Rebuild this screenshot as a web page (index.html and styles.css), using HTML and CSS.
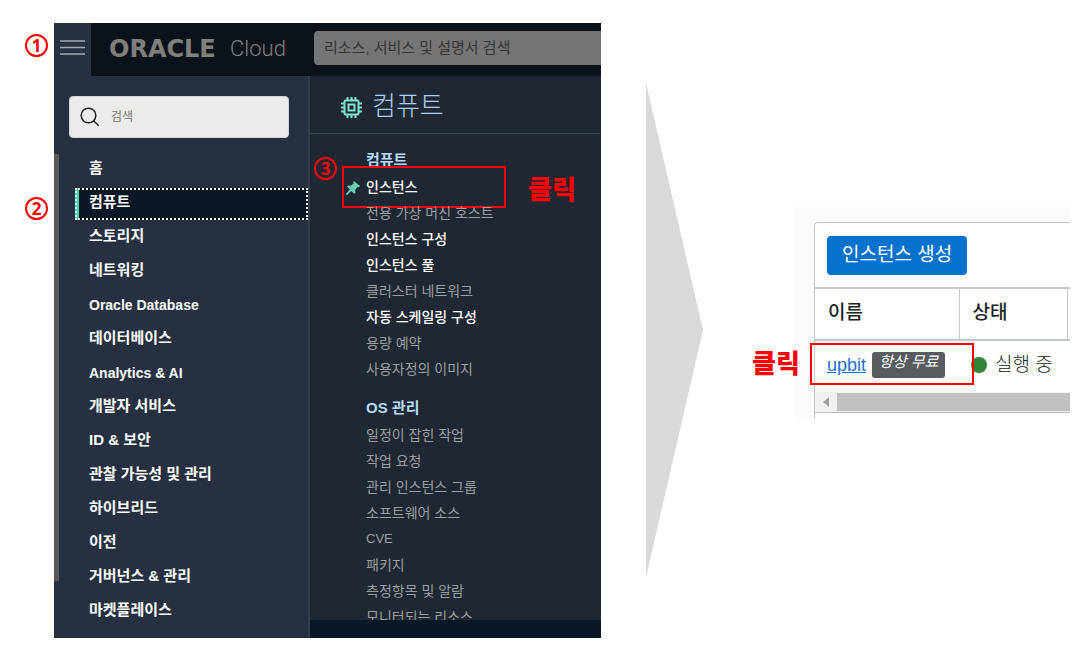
FILE: index.html
```html
<!DOCTYPE html>
<html lang="ko">
<head>
<meta charset="utf-8">
<meta name="viewport" content="width=device-width, initial-scale=1">
<title>Oracle Cloud 인스턴스</title>
<link rel="stylesheet" href="styles.css">
</head>
<body>
<main class="page">
  <section class="console">
    <header class="topbar">
      <button class="menu-button" type="button" aria-label="메뉴">
        <svg width="26" height="18" viewBox="0 0 26 18" fill="none" stroke="#a3a8ae" stroke-width="1.500"><path d="M0 2h25M0 8.500h25M0 15h25"/></svg>
      </button>
      <span class="step step-menu">1</span>
      <div class="brand"><span class="brand-name">ORACLE</span><span class="brand-cloud">Cloud</span></div>
      <input class="top-search" type="text" aria-label="리소스 검색" placeholder="리소스, 서비스 및 설명서 검색">
    </header>
    <div class="console-body">
      <nav class="sidebar" aria-label="서비스">
        <label class="side-search">
          <svg width="20" height="20" viewBox="0 0 20 20" fill="none" stroke="#222" stroke-width="1.500"><circle cx="8.500" cy="8.500" r="7.300"/><path d="M13.700 13.700l5 5"/></svg>
          <input type="text" aria-label="검색" placeholder="검색">
        </label>
        <ul class="services">
          <li><a href="#">홈</a></li>
          <li class="selected"><span class="step step-service">2</span><a href="#">컴퓨트</a></li>
          <li><a href="#">스토리지</a></li>
          <li><a href="#">네트워킹</a></li>
          <li class="latin"><a href="#">Oracle Database</a></li>
          <li><a href="#">데이터베이스</a></li>
          <li class="latin"><a href="#">Analytics &amp; AI</a></li>
          <li><a href="#">개발자 서비스</a></li>
          <li><a href="#">ID &amp; 보안</a></li>
          <li><a href="#">관찰 가능성 및 관리</a></li>
          <li><a href="#">하이브리드</a></li>
          <li><a href="#">이전</a></li>
          <li><a href="#">거버넌스 &amp; 관리</a></li>
          <li><a href="#">마켓플레이스</a></li>
        </ul>
        <div class="side-scroll"></div>
      </nav>
      <div class="detail">
        <div class="detail-head">
          <svg width="21" height="21" viewBox="0 0 21 21" fill="none" stroke="#7fe3cd" stroke-width="2"><rect x="3.500" y="3.500" width="14" height="14" rx="1"/><rect x="7.500" y="7.500" width="6" height="6"/><path d="M6.500 0v3M10.500 0v3M14.500 0v3M6.500 18v3M10.500 18v3M14.500 18v3M0 6.500h3M0 10.500h3M0 14.500h3M18 6.500h3M18 10.500h3M18 14.500h3"/></svg>
          <h1>컴퓨트</h1>
        </div>
        <div class="groups">
          <section class="group">
            <h2>컴퓨트</h2>
            <ul>
              <li class="pinned strong">
                <svg class="pin" width="14" height="14" viewBox="0 0 14 14" fill="#69cdb0"><path d="M8 0l6 5-1 1.300-1.400-.200-2.400 2.600.200 3-1.200 1L5.300 9.900 1 14l-1-.300.200-1.200L3.800 8.500 1 5.600 2 4.500l3.200.100 2.500-2.300L7.200.900z"/></svg>
                <a href="#">인스턴스</a>
                <span class="mark mark-instance"></span>
                <span class="step step-instance">3</span>
                <strong class="click click-instance">클릭</strong>
              </li>
              <li><a href="#">전용 가상 머신 호스트</a></li>
              <li class="strong"><a href="#">인스턴스 구성</a></li>
              <li class="strong"><a href="#">인스턴스 풀</a></li>
              <li><a href="#">클러스터 네트워크</a></li>
              <li class="strong"><a href="#">자동 스케일링 구성</a></li>
              <li><a href="#">용량 예약</a></li>
              <li><a href="#">사용자정의 이미지</a></li>
            </ul>
          </section>
          <section class="group">
            <h2>OS 관리</h2>
            <ul>
              <li><a href="#">일정이 잡힌 작업</a></li>
              <li><a href="#">작업 요청</a></li>
              <li><a href="#">관리 인스턴스 그룹</a></li>
              <li><a href="#">소프트웨어 소스</a></li>
              <li class="latin"><a href="#">CVE</a></li>
              <li><a href="#">패키지</a></li>
              <li><a href="#">측정항목 및 알람</a></li>
              <li><a href="#">모니터되는 리소스</a></li>
            </ul>
          </section>
        </div>
        <div class="detail-foot"></div>
      </div>
    </div>
  </section>

  <svg class="arrow" viewBox="0 0 57 494" preserveAspectRatio="none" aria-hidden="true"><path d="M0 0L57 247 0 494z" fill="#d9d9d9"/></svg>

  <section class="result">
    <div class="card">
      <div class="toolbar"><button class="create" type="button">인스턴스 생성</button></div>
      <table class="instances">
        <colgroup><col class="col-name"><col class="col-state"><col></colgroup>
        <thead><tr><th>이름</th><th>상태</th><th></th></tr></thead>
        <tbody>
          <tr>
            <td>
              <div class="name-cell">
                <a href="#">upbit</a><em class="badge">항상 무료</em>
                <span class="mark mark-name"></span>
                <strong class="click click-name">클릭</strong>
              </div>
            </td>
            <td colspan="2"><div class="state-cell"><span class="dot"></span>실행 중</div></td>
          </tr>
        </tbody>
      </table>
      <div class="scrollbar"><svg width="6" height="10" viewBox="0 0 6 10" fill="#a0a0a0"><path d="M6 0v10L0 5z"/></svg><span class="thumb"></span></div>
    </div>
  </section>
</main>
</body>
</html>
```
FILE: styles.css
```css
* { box-sizing: border-box; }

body {
  margin: 0;
  background: #fff;
  font-family: "Liberation Sans", "Noto Sans CJK KR", sans-serif;
}

a { color: inherit; text-decoration: none; }
ul { margin: 0; padding: 0; list-style: none; }
h1, h2 { margin: 0; }
svg { display: block; flex: none; }

.page {
  display: grid;
  grid-template-columns: minmax(0, 547fr) 193px minmax(0, 276fr);
  align-items: start;
  padding: 23px 10px 8px 54px;
}

/* Console */
.topbar {
  position: relative;
  display: flex;
  align-items: center;
  height: 53px;
  background: #0c1219;
}

.menu-button {
  display: flex;
  align-items: center;
  align-self: stretch;
  flex: none;
  width: 37px;
  padding: 0 0 4px 6px;
  border: 0;
  background: #263040;
}

.brand {
  display: flex;
  align-items: center;
  flex: none;
  width: 223px;
  padding: 0 0 2px 18px;
  color: #807f7c;
  font-size: 22px;
  line-height: 34px;
}

.brand-name {
  width: 121px;
  font-family: "DejaVu Sans", sans-serif;
  font-size: 24px;
  font-weight: 700;
}

.brand-cloud {
  font-family: Roboto, "Liberation Sans", sans-serif;
  font-weight: 300;
}

.top-search {
  flex: 1;
  min-width: 0;
  height: 34px;
  margin-bottom: 3px;
  padding: 0 10px 2px;
  border: 0;
  border-radius: 4px 0 0 4px;
  background: #757575;
  font: inherit;
  font-size: 15px;
}

.top-search::placeholder { color: #363636; opacity: 1; }

.console-body {
  display: grid;
  grid-template-columns: 256px minmax(0, 1fr);
}

.sidebar {
  position: relative;
  padding: 20px 0 10px;
  border-right: 2px solid #343f4c;
  background: #263040;
}

.side-search {
  display: flex;
  align-items: center;
  gap: 11px;
  height: 42px;
  margin: 0 19px 16px 15px;
  padding-left: 10px;
  border: 1px solid #d2d5d6;
  border-radius: 4px;
  background: #ebebe9;
}

.side-search input {
  flex: 1;
  min-width: 0;
  padding: 0;
  border: 0;
  background: none;
  font: inherit;
  font-size: 12px;
}

.side-search input::placeholder { color: #777; opacity: 1; }

.services {
  display: grid;
  gap: 2px;
  margin-left: 21px;
  color: #fff;
  font-size: 15px;
  font-weight: 700;
  line-height: 24px;
}

.services li {
  position: relative;
  height: 32px;
  padding: 2px 14px;
}

.services .latin {
  padding-top: 3px;
  font-size: 14px;
}

.services .selected {
  background: linear-gradient(to right, #4fd1b0 4px, #0a1727 4px);
  outline: 2px dotted #fff;
  outline-offset: -2px;
}

.side-scroll {
  position: absolute;
  top: 78px;
  bottom: 57px;
  left: 0;
  width: 5px;
  background: #595959;
}

.detail {
  display: flex;
  flex-direction: column;
  min-width: 0;
  background: #1f2732;
}

.detail-head {
  display: flex;
  align-items: center;
  gap: 10px;
  height: 58px;
  padding: 6px 0 0 31px;
  border-bottom: 1px solid #3d4754;
}

.detail-head h1 {
  padding-bottom: 4px;
  color: #a9cdf3;
  font-size: 26px;
  font-weight: 300;
  line-height: 36px;
}

.groups {
  display: flex;
  flex: 1 1 0;
  flex-direction: column;
  gap: 12px;
  min-height: 0;
  padding: 12px 0 0 56px;
  overflow: hidden;
}

.group h2 {
  color: #b5dcff;
  font-size: 15px;
  font-weight: 700;
  line-height: 28px;
}

.group li {
  position: relative;
  color: #9c9e9f;
  font-size: 14px;
  line-height: 26px;
}

.group .latin { font-size: 13px; }

.group .strong {
  color: #fff;
  font-weight: 500;
}

.pin {
  position: absolute;
  top: 7px;
  left: -20px;
}

.detail-foot {
  height: 18px;
  background: #0a1727;
}

/* Annotations */
.step {
  position: absolute;
  display: flex;
  align-items: center;
  justify-content: center;
  width: 23px;
  height: 23px;
  border: 2px solid #f00;
  border-radius: 50%;
  color: #f00;
  font-family: "Noto Sans", sans-serif;
  font-size: 17px;
  font-weight: 700;
  line-height: 20px;
}

.step-menu { top: 11px; left: -29px; }
.step-service { top: 9px; left: -50px; }
.step-instance { top: -17px; left: -52px; }

.mark {
  position: absolute;
  width: 164px;
  height: 42px;
  border: 2px solid #f00;
}

.mark-instance { top: -8px; left: -24px; }
.mark-name { top: -9px; left: -17px; }

.click {
  position: absolute;
  color: #f00;
  font-size: 26px;
  font-weight: 900;
  line-height: 36px;
  white-space: nowrap;
}

.click-instance { top: -2px; left: 162px; }
.click-name { top: -6px; left: -75px; }

.arrow {
  width: 57px;
  height: 494px;
  margin: 60px 0 0 45px;
}

/* Instance list */
.result {
  margin-top: 184px;
  padding: 15px 0 0 20px;
  background: #fbfbfb;
}

.card {
  padding-bottom: 6px;
  border: 1px solid #c3c8cf;
  border-width: 1px 0 0 1px;
  border-radius: 4px 0 0 0;
  background: #fff;
}

.toolbar { padding: 13px 12px 12px; }

.create {
  height: 39px;
  padding: 0 15px 6px;
  border: 0;
  border-radius: 4px;
  background: #0572ce;
  color: #fff;
  font: inherit;
  font-size: 19px;
  white-space: nowrap;
}

.instances {
  width: 100%;
  border-collapse: collapse;
  table-layout: fixed;
  color: #222;
  font-size: 19px;
  line-height: 26px;
}

.col-name { width: 144px; }
.col-state { width: 108px; }

.instances th {
  height: 52px;
  padding: 0 13px 3px;
  border: solid #c3c8cf;
  border-width: 2px 1px;
  font-weight: 500;
  text-align: left;
}

.instances th:first-child { border-left: 0; }
.instances th:last-child { border-right: 0; padding: 0; }

.instances td {
  height: 52px;
  padding: 0 12px 3px;
}

.name-cell {
  position: relative;
  display: flex;
  align-items: center;
  gap: 6px;
}

.name-cell a {
  color: #1a6fd0;
  font-size: 18px;
  text-decoration: underline;
}

.badge {
  height: 26px;
  padding: 0 7px;
  border-radius: 3px;
  background: #585c60;
  color: #fff;
  font-size: 15px;
  line-height: 20px;
  white-space: nowrap;
}

.mark-name, .click-name { z-index: 1; }

.state-cell {
  display: flex;
  align-items: center;
  gap: 8px;
  font-weight: 300;
  white-space: nowrap;
}

.dot {
  width: 16px;
  height: 16px;
  border-radius: 50%;
  background: #328536;
}

.scrollbar {
  display: flex;
  align-items: center;
  gap: 8px;
  height: 21px;
  padding-left: 8px;
  border-bottom: 1px solid #b4bac2;
  background: #f1f1f1;
}

.thumb {
  flex: 1;
  height: 18px;
  background: #c1c1c1;
}
```
